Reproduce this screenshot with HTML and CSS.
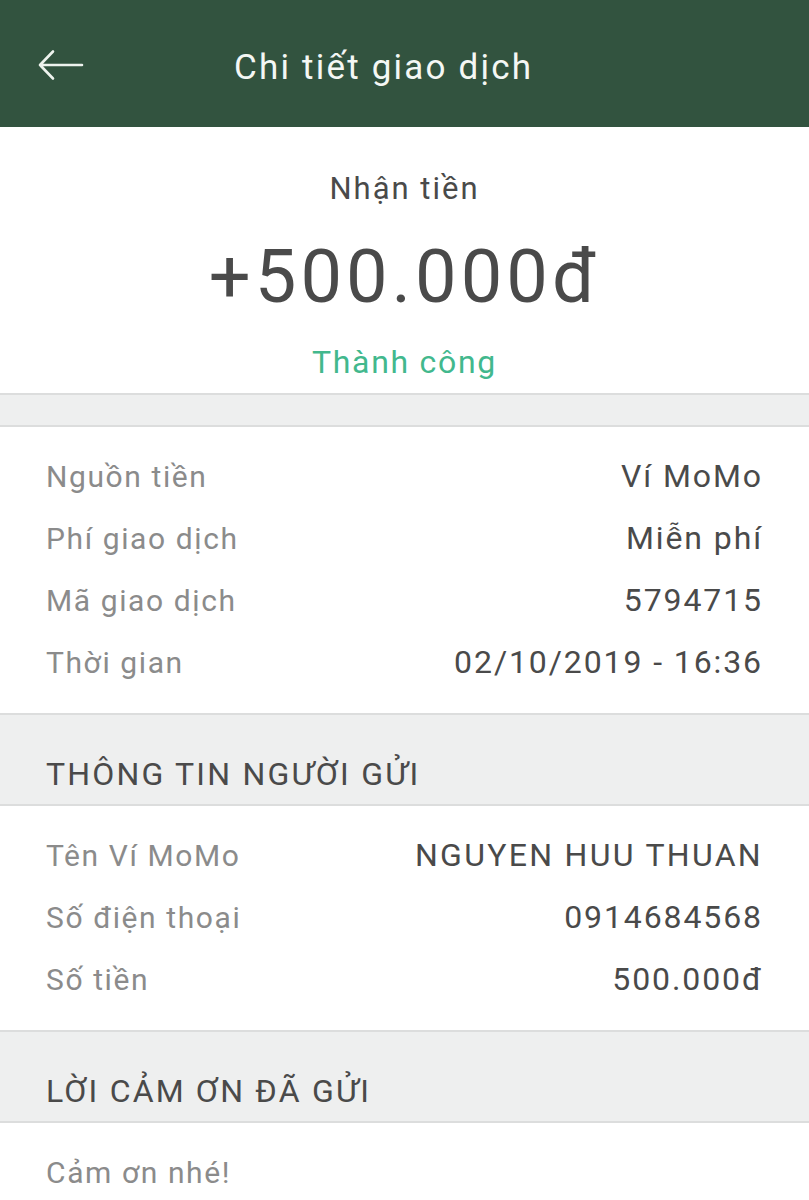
FILE: index.html
```html
<!DOCTYPE html>
<html lang="vi">
<head>
    <meta charset="UTF-8" />
    <title>Chi tiết giao dịch</title>
    <link rel="stylesheet" href="styles.css">
</head>
<body>
    <header class="topbar">
        <svg class="back" width="46" height="32" viewBox="0 0 46 32">
            <path d="M2 16 H44 M15 2.5 L2 16 L15 29.5" fill="none" stroke="#eef3ee" stroke-width="2.6" stroke-linecap="round" stroke-linejoin="round"/>
        </svg>
        <h1 class="title">Chi tiết giao dịch</h1>
    </header>

    <section class="summary">
        <p class="kind">Nhận tiền</p>
        <p class="amount">+500.000đ</p>
        <p class="status">Thành công</p>
    </section>

    <div class="spacer"></div>

    <section class="rows">
        <div class="row"><span class="label">Nguồn tiền</span><span class="value">Ví MoMo</span></div>
        <div class="row"><span class="label">Phí giao dịch</span><span class="value">Miễn phí</span></div>
        <div class="row"><span class="label">Mã giao dịch</span><span class="value">5794715</span></div>
        <div class="row"><span class="label">Thời gian</span><span class="value">02/10/2019 - 16:36</span></div>
    </section>

    <h2 class="section-title">THÔNG TIN NGƯỜI GỬI</h2>
    <section class="rows">
        <div class="row"><span class="label">Tên Ví MoMo</span><span class="value wide">NGUYEN HUU THUAN</span></div>
        <div class="row"><span class="label">Số điện thoại</span><span class="value">0914684568</span></div>
        <div class="row"><span class="label">Số tiền</span><span class="value">500.000đ</span></div>
    </section>

    <h2 class="section-title">LỜI CẢM ƠN ĐÃ GỬI</h2>
    <section class="rows">
        <div class="row"><span class="label">Cảm ơn nhé!</span></div>
    </section>
</body>
</html>
```

FILE: styles.css
```css
body {
    margin: 0;
    background: #fff;
    font-family: Roboto, "Noto Sans", sans-serif;
    color: #444;
}
p, h1, h2 {
    margin: 0;
    font-weight: normal;
}
.topbar {
    height: 127px;
    box-sizing: border-box;
    padding: 12px 0 0 38px;
    background: #32533f;
    display: flex;
    align-items: center;
}
.back {
    display: block;
    margin-top: -10px;
}
.title {
    margin-left: 150px;
    font-size: 35px;
    letter-spacing: 2.2px;
    color: #f4f7f4;
    margin-top: -4px;
}
.summary {
    padding: 42px 0 11px;
    text-align: center;
}
.kind {
    font-size: 31px;
    line-height: 40px;
    letter-spacing: 2px;
    color: #4a4a4a;
}
.amount {
    margin-top: 23px;
    font-size: 74px;
    line-height: 90px;
    letter-spacing: 4px;
    color: #4a4a4a;
}
.status {
    margin-top: 20px;
    font-size: 32px;
    line-height: 40px;
    letter-spacing: 1.7px;
    color: #42b88d;
}
.spacer {
    height: 30px;
    background: #eeefef;
    border-top: 2px solid #dcdddd;
    border-bottom: 2px solid #dcdddd;
}
.rows {
    padding: 18px 46px 20px;
}
.row {
    display: flex;
    justify-content: space-between;
    height: 62px;
    align-items: center;
}
.label {
    font-size: 30px;
    letter-spacing: 1.6px;
    color: #8b8b8b;
}
.value {
    font-size: 32px;
    letter-spacing: 1.9px;
    color: #4a4a4a;
}
.value.wide {
    letter-spacing: 2.3px;
}
.section-title {
    margin: 0;
    padding: 29px 46px 0;
    height: 60px;
    line-height: 60px;
    background: #eeefef;
    border-top: 2px solid #dcdddd;
    border-bottom: 2px solid #dcdddd;
    font-size: 32px;
    letter-spacing: 2.2px;
    color: #4a4a4a;
}
```
